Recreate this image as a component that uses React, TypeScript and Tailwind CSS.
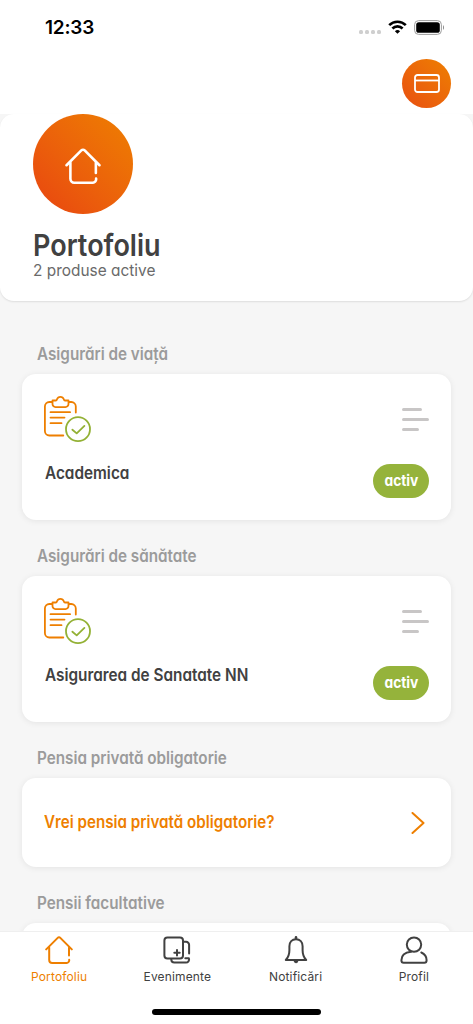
import React from 'react';
import { clsx } from 'clsx';

const HomeIcon: React.FC<{ className?: string; strokeWidth?: number }> = ({ className, strokeWidth = 2 }) => (
  <svg viewBox="0 0 28 28" className={className} fill="none" stroke="currentColor" strokeWidth={strokeWidth} strokeLinecap="round" strokeLinejoin="round">
    <path d="M1.200 13.400 12.700 1.900a1.800 1.800 0 0 1 2.600 0L26.800 13.400" />
    <path d="M4.200 11.500V24a3 3 0 0 0 3 3h14a2.800 2.800 0 0 0 3-3.200" />
    <path d="M24 11.500v8" />
  </svg>
);

const EventsIcon: React.FC = () => (
  <svg viewBox="0 0 28 28" className="size-7" fill="none" stroke="currentColor" strokeWidth="2" strokeLinecap="round" strokeLinejoin="round">
    <rect x="1.400" y="1.400" width="18.600" height="21" rx="3" />
    <path d="M20.500 5.800h2.600a3 3 0 0 1 3 3v8.600" />
    <path d="M8.300 23v.6a3 3 0 0 0 3 3h11.400a3.200 3.200 0 0 0 3.200-4.300h-3.600" />
    <path d="M14 14v5.400M11.300 16.700h5.400" />
  </svg>
);

const BellIcon: React.FC = () => (
  <svg viewBox="0 0 28 28" className="size-7" fill="none" stroke="currentColor" strokeWidth="2" strokeLinecap="round" strokeLinejoin="round">
    <path d="M14 1.400v1.400" strokeWidth="2.600" />
    <path d="M3.800 24c2.800-3 3.600-5.600 3.600-9.800v-4C7.400 6 10 3.200 14 3.200s6.600 2.800 6.600 7v4c0 4.200.8 6.800 3.600 9.800Z" />
    <path d="M12.200 25h3.600a1.800 1.800 0 0 1-3.600 0Z" fill="currentColor" strokeWidth="1" />
  </svg>
);

const ProfileIcon: React.FC = () => (
  <svg viewBox="0 0 28 28" className="size-7" fill="none" stroke="currentColor" strokeWidth="2" strokeLinecap="round" strokeLinejoin="round">
    <circle cx="14" cy="8.600" r="7.200" />
    <path d="M11 15.800c-6 .7-9.600 3.900-9.600 8.400 0 1.600.9 2.600 2.300 2.600h20.600c1.400 0 2.300-1 2.300-2.600 0-3.400-2-6.300-5.300-7.700" />
  </svg>
);

const PolicyIcon: React.FC = () => (
  <svg viewBox="0 0 48 48" className="size-12" fill="none" strokeWidth="1.800" strokeLinecap="round" strokeLinejoin="round">
    <g stroke="#ee7f00">
      <path d="M8 7H5.300A4.500 4.500 0 0 0 .9 11.500V36a4.500 4.500 0 0 0 4.400 4.500h14" />
      <path d="M25 7h2.300a4.500 4.500 0 0 1 4.500 4.500v6" />
      <path d="M8.500 5.500h3.300c.7 0 1-.4 1.200-1.200a3.600 3.600 0 0 1 6.800 0c.2.800.5 1.200 1.200 1.200h3.500v3.600a3 3 0 0 1-3 3h-10a3 3 0 0 1-3-3Z" />
      <path d="M6.500 17.200h19.600M6.500 22.600h14M6.500 28.200h11" />
    </g>
    <g stroke="#93b135">
      <circle cx="34" cy="34.200" r="12" />
      <path d="m28.400 34.700 4.300 3.700 7.700-7.500" />
    </g>
  </svg>
);

const StatusBar: React.FC = () => (
  <div className="h-[54px] shrink-0 flex items-center justify-between pl-[45px] pr-[28px]">
    <span className="mt-0.5 text-[19px] font-semibold text-black tracking-[-0.2px]">12:33</span>
    <div className="flex items-center">
      <div className="flex gap-[2px] mt-[10px] mr-[7px]">
        {[0, 1, 2, 3].map((dot) => (
          <div key={dot} className="size-1 rounded-[1.5px] bg-[#cfcfcf]" />
        ))}
      </div>
      <svg viewBox="0 0 19 14" className="w-[19px] h-[14px] mr-[7px]" fill="none" stroke="#000" strokeWidth="2.600">
        <path d="M1.200 5.200a11.800 11.800 0 0 1 16.600 0" />
        <path d="M4.400 8.500a7.200 7.200 0 0 1 10.200 0" />
        <path d="M9.500 13.800 6.900 11.200a3.700 3.700 0 0 1 5.200 0Z" fill="#000" stroke="none" />
      </svg>
      <svg viewBox="0 0 31 15" className="w-[31px] h-[15px]">
        <rect x=".6" y=".6" width="26.800" height="13.800" rx="4" fill="none" stroke="#9d9d9d" />
        <rect x="2.200" y="2.200" width="23.600" height="10.600" rx="2.600" fill="#000" />
        <path d="M29 5.200c1.300.4 1.300 4.200 0 4.600Z" fill="#8a8a8a" />
      </svg>
    </div>
  </div>
);

const SectionTitle: React.FC<{ children: React.ReactNode }> = ({ children }) => (
  <h2 className="h-14 pt-[26px] pl-[15px] leading-5 text-[17px] font-semibold text-[#9b9b9b] whitespace-nowrap">
    <span className="inline-block origin-left scale-x-[0.897]">{children}</span>
  </h2>
);

const ProductCard: React.FC<{ name: string }> = ({ name }) => (
  <div className="h-[146px] rounded-[14px] bg-white shadow-[0_1px_6px_rgba(0,0,0,0.08)] flex justify-between pl-[22px] pr-[22px] pt-[21px] pb-[22px]">
    <div className="flex flex-col">
      <PolicyIcon />
      <span className="mt-5 ml-px leading-5 text-[17px] font-semibold text-[#414141] whitespace-nowrap origin-left scale-x-[0.902]">
        {name}
      </span>
    </div>
    <div className="flex flex-col items-end justify-between">
      <div className="w-[27px] pt-[13px] flex flex-col gap-[7px]">
        <div className="h-[3px] w-5 rounded-full bg-[#c8c6c6]" />
        <div className="h-[3px] w-[27px] rounded-full bg-[#c8c6c6]" />
        <div className="h-[3px] w-[17px] rounded-full bg-[#c8c6c6]" />
      </div>
      <div className="w-14 h-[34px] rounded-full bg-[#95b33b] flex items-center justify-center text-[15px] font-bold text-white">
        <span className="mt-px scale-x-[0.92]">activ</span>
      </div>
    </div>
  </div>
);

const tabs = [
  { label: 'Portofoliu', icon: <HomeIcon className="size-7" />, active: true },
  { label: 'Evenimente', icon: <EventsIcon /> },
  { label: 'Notificări', icon: <BellIcon /> },
  { label: 'Profil', icon: <ProfileIcon /> },
];

const App: React.FC = () => {
  return (
    <div className="h-screen flex flex-col overflow-hidden bg-[#f6f6f6] font-['Inter',sans-serif] [font-feature-settings:'cv11']">
      <header className="h-[114px] shrink-0 bg-white flex flex-col">
        <StatusBar />
        <div className="flex justify-end pr-[22px] pt-[5px]">
          <button className="size-[49px] rounded-full bg-linear-to-tr from-[#e84e10] to-[#ee7f00] flex items-center justify-center">
            <svg viewBox="0 0 26 19" className="w-[26px] h-[19px]" fill="none" stroke="#fff" strokeWidth="1.800">
              <rect x="1" y="1" width="24" height="17" rx="2.500" />
              <path d="M1 6.500h24" />
            </svg>
          </button>
        </div>
      </header>

      <section className="h-[187px] shrink-0 rounded-[14px] bg-white shadow-[0_1px_2px_rgba(0,0,0,0.1)] pl-[33px]">
        <div className="size-[100px] rounded-full bg-linear-to-tr from-[#e84310] to-[#ee7f00] flex items-center justify-center text-white">
          <HomeIcon className="size-9 mt-1" strokeWidth={2} />
        </div>
        <h1 className="mt-[15px] leading-8 text-[30px] font-semibold text-[#414141]">
          <span className="inline-block origin-left scale-x-[0.9]">Portofoliu</span>
        </h1>
        <p className="-mt-px leading-5 text-[16.5px] text-[#6a6a6a]">
          <span className="inline-block origin-left scale-x-[0.935]">2 produse active</span>
        </p>
      </section>

      <main className="flex-1 min-h-0 overflow-hidden px-[22px] pt-[17px]">
        <SectionTitle>Asigurări de viață</SectionTitle>
        <ProductCard name="Academica" />
        <SectionTitle>Asigurări de sănătate</SectionTitle>
        <ProductCard name="Asigurarea de Sanatate NN" />
        <SectionTitle>Pensia privată obligatorie</SectionTitle>
        <div className="h-[89px] rounded-[14px] bg-white shadow-[0_1px_6px_rgba(0,0,0,0.08)] flex items-center justify-between pl-[22px] pr-[26px]">
          <span className="text-[17px] font-semibold text-[#ee7f00] whitespace-nowrap origin-left scale-x-[0.893]">
            Vrei pensia privată obligatorie?
          </span>
          <svg viewBox="0 0 14 22" className="w-[14px] h-[22px]" fill="none" stroke="#ee7f00" strokeWidth="2" strokeLinecap="round" strokeLinejoin="round">
            <path d="M1.500 1 12.500 11 1.500 21" />
          </svg>
        </div>
        <SectionTitle>Pensii facultative</SectionTitle>
        <div className="h-[89px] rounded-[14px] bg-white shadow-[0_1px_6px_rgba(0,0,0,0.08)]" />
      </main>

      <nav className="h-[93px] shrink-0 bg-white border-t border-[#efefef] flex flex-col items-center">
        <div className="w-full grid grid-cols-4 pt-1">
          {tabs.map((tab) => (
            <button
              key={tab.label}
              className={clsx('flex flex-col items-center', tab.active ? 'text-[#ee7f00]' : 'text-[#414141]')}
            >
              {tab.icon}
              <span className="mt-[5px] leading-4 text-[12px] tracking-[0.15px] [font-feature-settings:normal]">{tab.label}</span>
            </button>
          ))}
        </div>
        <div className="mt-6 w-[169px] h-[6px] rounded-full bg-black" />
      </nav>
    </div>
  );
};

export default App;
